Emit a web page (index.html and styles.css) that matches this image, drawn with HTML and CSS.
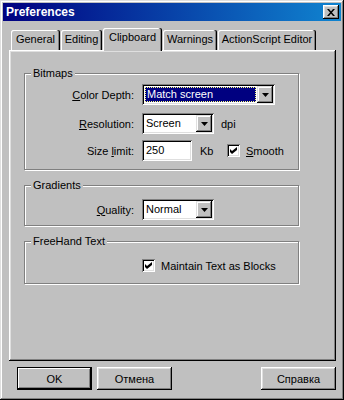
FILE: index.html
```html
<!DOCTYPE html>
<html lang="en">
<head>
  <meta charset="UTF-8">
  <meta name="viewport" content="width=device-width, initial-scale=1.0">
  <title>Preferences</title>
  <link rel="stylesheet" href="styles.css">
</head>
<body>
  <div class="window">
    <div class="titlebar">
      <span class="title">Preferences</span>
      <button class="close-btn" type="button">
        <svg width="8" height="7" viewBox="0 0 8 7"><path d="M0 0h2l6 7H6z M6 0h2L2 7H0z" fill="#000"/></svg>
      </button>
    </div>

    <div class="content">
      <div class="tabs">
        <div class="tab tab-general">General</div>
        <div class="tab tab-editing">Editing</div>
        <div class="tab tab-clipboard active">Clipboard</div>
        <div class="tab tab-warnings">Warnings</div>
        <div class="tab tab-actionscript">ActionScript Editor</div>
      </div>

      <div class="panel">
        <!-- Bitmaps -->
        <fieldset class="group group-bitmaps">
          <legend>Bitmaps</legend>
          <div class="row row-depth">
            <label class="field-label"><u>C</u>olor Depth:</label>
            <div class="combo combo-depth">
              <span class="combo-value selected">Match screen</span>
              <span class="combo-btn">
                <svg width="7" height="4" viewBox="0 0 7 4"><path d="M0 0h7L3.5 4z" fill="#000"/></svg>
              </span>
            </div>
          </div>
          <div class="row row-resolution">
            <label class="field-label"><u>R</u>esolution:</label>
            <div class="combo combo-short">
              <span class="combo-value">Screen</span>
              <span class="combo-btn">
                <svg width="7" height="4" viewBox="0 0 7 4"><path d="M0 0h7L3.5 4z" fill="#000"/></svg>
              </span>
            </div>
            <span class="unit unit-dpi">dpi</span>
          </div>
          <div class="row row-size">
            <label class="field-label">Size <u>l</u>imit:</label>
            <div class="textbox">250</div>
            <span class="unit unit-kb">Kb</span>
            <span class="checkbox">
              <svg width="7" height="7" viewBox="0 0 7 7"><path d="M0 2l2 2 5-4v3L2 7 0 5z" fill="#000"/></svg>
            </span>
            <span class="check-label"><u>S</u>mooth</span>
          </div>
        </fieldset>

        <!-- Gradients -->
        <fieldset class="group group-gradients">
          <legend>Gradients</legend>
          <div class="row row-quality">
            <label class="field-label"><u>Q</u>uality:</label>
            <div class="combo combo-short">
              <span class="combo-value">Normal</span>
              <span class="combo-btn">
                <svg width="7" height="4" viewBox="0 0 7 4"><path d="M0 0h7L3.5 4z" fill="#000"/></svg>
              </span>
            </div>
          </div>
        </fieldset>

        <!-- FreeHand Text -->
        <fieldset class="group group-freehand">
          <legend>FreeHand Text</legend>
          <div class="row row-blocks">
            <span class="checkbox">
              <svg width="7" height="7" viewBox="0 0 7 7"><path d="M0 2l2 2 5-4v3L2 7 0 5z" fill="#000"/></svg>
            </span>
            <span class="check-label">Maintain Text as Blocks</span>
          </div>
        </fieldset>
      </div>

      <div class="buttons">
        <button class="btn btn-default" type="button">OK</button>
        <button class="btn btn-cancel" type="button">Отмена</button>
        <button class="btn btn-help" type="button">Справка</button>
      </div>
    </div>
  </div>
</body>
</html>
```

FILE: styles.css
```css
* {
  box-sizing: border-box;
}

body {
  margin: 0;
  background: #c0c0c0;
  font-family: "Liberation Sans", Arial, sans-serif;
  font-size: 11px;
  color: #000;
}

.window {
  width: 344px;
  height: 400px;
  padding: 3px;
  background: #c0c0c0;
  box-shadow: inset -1px -1px #000, inset 1px 1px #dfdfdf, inset -2px -2px #808080, inset 2px 2px #fff;
}

.titlebar {
  display: flex;
  align-items: center;
  justify-content: space-between;
  height: 18px;
  padding: 0 2px 0 3px;
  background: linear-gradient(to right, #000080, #1084d0);
}

.title {
  color: #fff;
  font-weight: bold;
  font-size: 12px;
}

.close-btn {
  display: flex;
  align-items: center;
  justify-content: center;
  width: 16px;
  height: 14px;
  padding: 0;
  border: 0;
  background: #c0c0c0;
  box-shadow: inset -1px -1px #000, inset 1px 1px #fff, inset -2px -2px #808080, inset 2px 2px #dfdfdf;
}

.content {
  padding: 7px 0 0 6px;
}

/* tabs */
.tabs {
  display: flex;
  align-items: flex-end;
  gap: 1px;
  height: 22px;
  padding-left: 2px;
}

.tab {
  height: 20px;
  line-height: 19px;
  text-align: center;
  background: #c0c0c0;
  border-radius: 2px 2px 0 0;
  box-shadow: inset -1px 0 #000, inset -2px 0 #808080, inset 1px 1px #fff;
}

.tab-general { width: 49px; }
.tab-editing { width: 41px; }
.tab-clipboard { width: 59px; }
.tab-warnings { width: 54px; }
.tab-actionscript { width: 98px; }

.tab.active {
  position: relative;
  z-index: 1;
  height: 23px;
  margin-bottom: -1px;
}

.panel {
  width: 327px;
  height: 311px;
  padding: 17px 0 0 15px;
  box-shadow: inset -1px -1px #000, inset 1px 1px #fff, inset -2px -2px #808080, inset 2px 2px #dfdfdf;
}

/* group boxes */
.group {
  width: 275px;
  margin: 0;
  padding: 0;
  border: 1px solid #808080;
  box-shadow: inset 1px 1px #fff, 1px 1px #fff;
  min-inline-size: 0;
}

.group legend {
  margin-left: 6px;
  padding: 0 2px;
  line-height: 13px;
  background: #c0c0c0;
}

.group-bitmaps { height: 103px; }
.group-gradients { height: 47px; margin-top: 9px; }
.group-freehand { height: 49px; margin-top: 9px; }

.row {
  display: flex;
  align-items: center;
  height: 21px;
}

.row-depth { margin-top: 4px; }
.row-resolution { margin-top: 8px; }
.row-size { margin-top: 6px; }
.row-quality { margin-top: 7px; }
.row-blocks { margin-top: 7px; padding-left: 117px; }

.field-label {
  width: 109px;
  margin-right: 8px;
  text-align: right;
}

/* combo boxes */
.combo {
  display: flex;
  height: 21px;
  padding: 2px;
  background: #fff;
  box-shadow: inset 1px 1px #808080, inset -1px -1px #fff, inset 2px 2px #000, inset -2px -2px #dfdfdf;
}

.combo-depth { width: 133px; }
.combo-short { width: 72px; }

.combo-value {
  flex: 1;
  padding-left: 2px;
  line-height: 17px;
  white-space: nowrap;
  overflow: hidden;
}

.combo-value.selected {
  margin: 1px;
  padding-left: 1px;
  line-height: 13px;
  background: #000080;
  color: #fff;
  border: 1px dotted #ffff80;
}

.combo-btn {
  display: flex;
  align-items: center;
  justify-content: center;
  width: 16px;
  height: 17px;
  background: #c0c0c0;
  box-shadow: inset -1px -1px #000, inset 1px 1px #dfdfdf, inset -2px -2px #808080, inset 2px 2px #fff;
}

.textbox {
  width: 50px;
  height: 21px;
  padding: 2px 0 0 4px;
  line-height: 17px;
  background: #fff;
  box-shadow: inset 1px 1px #808080, inset -1px -1px #fff, inset 2px 2px #000, inset -2px -2px #dfdfdf;
}

.unit-dpi { margin-left: 7px; }
.unit-kb { width: 27px; margin-left: 8px; }

/* checkboxes */
.checkbox {
  display: flex;
  align-items: center;
  justify-content: center;
  width: 13px;
  height: 13px;
  background: #fff;
  box-shadow: inset 1px 1px #808080, inset -1px -1px #fff, inset 2px 2px #000, inset -2px -2px #dfdfdf;
}

.check-label {
  margin-left: 6px;
}

/* dialog buttons */
.buttons {
  display: flex;
  width: 327px;
  margin-top: 6px;
  padding-left: 8px;
}

.btn {
  width: 75px;
  height: 23px;
  padding: 0;
  border: 0;
  font: inherit;
  color: #000;
  background: #c0c0c0;
  box-shadow: inset -1px -1px #000, inset 1px 1px #fff, inset -2px -2px #808080, inset 2px 2px #dfdfdf;
}

.btn-default {
  border: 1px solid #000;
  box-shadow: inset -1px -1px #000, inset 1px 1px #fff, inset -2px -2px #808080;
}

.btn-cancel { margin-left: 5px; }
.btn-help { margin-left: auto; }
```
